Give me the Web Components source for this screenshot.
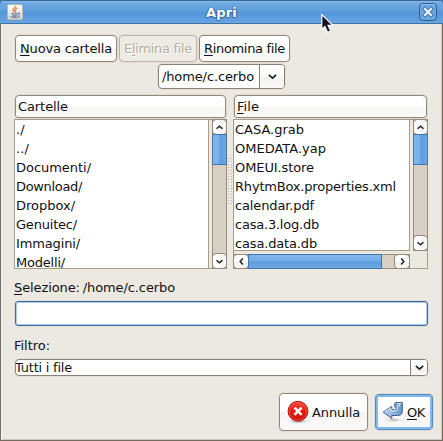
<!DOCTYPE html>
<html lang="it"><head><meta charset="utf-8"><title>Apri</title>
<style>
html,body{margin:0;width:443px;height:441px;overflow:hidden;background:#47789f;font:13px/19px "DejaVu Sans",sans-serif;color:#111}
</style></head><body><file-dialog></file-dialog>
<script>
const define=(name,html,setup)=>customElements.define(name,class extends HTMLElement{
  connectedCallback(){
    if(this.shadowRoot)return;
    const t=document.createElement('template');
    t.innerHTML='<style>*{box-sizing:border-box}:host{box-sizing:border-box}</style>'+html;
    this.attachShadow({mode:'open'}).appendChild(t.content.cloneNode(true));
    if(setup)setup(this,this.shadowRoot);
  }
});

/* Single-line text; w = advance width in pixels, key = index of the mnemonic letter */
define('fit-text',`<style>:host{display:block;white-space:pre;flex:none}span{display:inline-block}u{text-decoration:underline 1px;text-underline-offset:2px;text-decoration-skip-ink:none}</style><span></span>`,(h,r)=>{
  const s=r.querySelector('span'),t=h.getAttribute('t'),w=+h.getAttribute('w'),k=h.getAttribute('key');
  if(k===null)s.textContent=t;
  else{const u=document.createElement('u');u.textContent=t[+k];s.append(t.slice(0,+k),u,t.slice(+k+1))}
  if(w)s.style.letterSpacing=((w-s.getBoundingClientRect().width)/t.length)+'px';
});

define('push-button',`<style>
:host{display:flex;align-items:center;height:27px;border:1px solid #93877a;border-radius:4px;padding:0 0 1px 4px;background:linear-gradient(#fff 0,#fff 50%,#f5f4f2 51%,#fbfaf9 100%);box-shadow:0 0 0 1px #e3dfd7}
:host([disabled]){border-color:#bfb4a6;background:#eeebe5;color:#b8ae9f;text-shadow:1px 1px #fff}
:host([big]){height:38px;padding:0 0 1px 7px}
:host([primary]){height:36px;border:1px solid #5188c0;box-shadow:inset 0 0 0 2px #82b8ee,0 0 0 1px #e0dcd4;padding:0 0 1px 6px}
</style><slot></slot>`);

define('chevron-icon',`<style>:host{display:block;width:9px;height:9px}svg{display:block}:host([dir=up]) svg{transform:rotate(180deg)}:host([dir=left]) svg{transform:rotate(90deg)}:host([dir=right]) svg{transform:rotate(-90deg)}:host([big]) svg{transform:scale(1.22)}</style>
<svg width="9" height="9" viewBox="0 0 9 9"><path d="M1.5 3.2 4.5 5.8 7.5 3.2" fill="none" stroke="#222" stroke-width="1.5"/></svg>`);

define('combo-box',`<style>
:host{display:flex;border:1px solid #8c8074;border-radius:4px;background:#fff;box-shadow:0 0 0 1px #e3dfd7;overflow:hidden}
.v{flex:1;display:flex;align-items:center;overflow:hidden}
.b{width:25px;border-left:1px solid #8c8074;display:grid;place-items:center;background:linear-gradient(#fff 50%,#f3f1ee 51%,#faf9f8)}
:host([narrow]) .b{width:17px}
</style><div class="v"><slot></slot></div><div class="b"><chevron-icon big></chevron-icon></div>`);

define('column-header',`<style>:host{display:flex;align-items:center;height:23px;border:1px solid #94887d;border-radius:4px 4px 3px 3px;padding-left:3px;background:linear-gradient(#fff 50%,#f6f5f3 51%,#fafaf8);box-shadow:0 0 0 1px #e0dbd2}</style><slot></slot>`);

define('scroll-bar',`<style>
:host{display:flex;flex-direction:column;width:15px;border:1px solid #9b8f7c;background:#d8d0c5}
:host([h]){flex-direction:row;width:auto;height:15px}
.b{flex:0 0 14px;display:grid;place-items:center;background:linear-gradient(90deg,#fff 50%,#f1efec 51%,#faf9f8);outline:1px solid #94897c;border-radius:3px}
:host([h]) .b{background:linear-gradient(#fff 50%,#f1efec 51%,#faf9f8)}
.t{flex:0 0 var(--thumb);margin:1px 0 0;outline:1px solid #4375a5;background:linear-gradient(90deg,#80b7ee 0,#78b0e9 48%,#5d9bdc 52%,#6da9e5)}
:host([h]) .t{margin:0 0 0 1px;background:linear-gradient(#80b7ee 0,#72ace7 48%,#5c9bdc 52%,#6da9e5)}
.s{flex:1}
</style><div class="b"><chevron-icon class="a"></chevron-icon></div><div class="t"></div><div class="s"></div><div class="b"><chevron-icon class="z"></chevron-icon></div>`,(h,r)=>{
  const horizontal=h.hasAttribute('h');
  r.querySelector('.a').setAttribute('dir',horizontal?'left':'up');
  r.querySelector('.z').setAttribute('dir',horizontal?'right':'down');
});

define('list-pane',`<style>
:host{display:grid;grid-template-columns:1fr 14px;column-gap:3px;height:150px;border:1px solid #a99d86;background:#ece9e2}
.l{overflow:hidden;background:#fff;border-right:1px solid #a99d86;padding-left:var(--inset,2px)}
:host([both]){grid-template-rows:131px 14px;row-gap:3px}
:host([both]) .l{border-bottom:1px solid #a99d86}
.v{margin:-1px -1px -1px 0}:host([both]) .v{margin-bottom:0}
.h{margin:0 0 0 -1px;display:none}:host([both]) .h{display:flex}
</style><div class="l"><slot></slot></div><scroll-bar class="v" style="--thumb:29px"></scroll-bar><scroll-bar h class="h" style="--thumb:132px"></scroll-bar>`);

define('java-icon',`<style>:host{display:block;width:16px;height:16px}</style><svg width="16" height="16" viewBox="0 0 16 16">
<defs><linearGradient id="g" x2="0" y2="1"><stop stop-color="#fff"/><stop offset="1" stop-color="#d6d5d2"/></linearGradient></defs>
<rect x=".5" y=".5" width="15" height="15" rx="1.5" fill="url(#g)" stroke="#b9b6b0"/>
<path d="M8.8 1.7C9.5 3.2 5.3 4.6 6 6.3c.3.8 1.2 1.3 1.2 2M10.3 4.2C8.2 5 7.5 5.9 8.5 7c.5.6.3 1-.2 1.6" fill="none" stroke="#ed8228" stroke-width="1.3"/>
<path d="M4.2 9.2c1.5.7 5 .7 7 0M5 10.8c1.5.6 4 .6 5.5 0M11 9.3c2.2-.8 2.8 1.3.2 2.3M3.2 12.4c2 1.5 7.3 1.4 9.7.2M5.5 12c1.5.4 3 .4 4.2 0" fill="none" stroke="#547b99" stroke-width="1"/></svg>`);

define('title-bar',`<style>
:host{display:grid;grid-template-columns:27px 1fr 27px;align-items:center;height:24px;padding:1px 0 0;border-top:1px solid #3c6890;border-bottom:1px solid #41719f;background:linear-gradient(#86bbef 0,#70aae4 9%,#5f9edd 45%,#5295d6 52%,#5899dd 62%,#67a5e3 100%);color:#fff}
java-icon{margin:-1px 0 0 7px}.t{justify-self:center;font-weight:bold;text-shadow:0 1px 1px #285c91,1px 0 1px #396d9f,-1px 0 1px #396d9f}
.x{width:18px;height:18px;margin:-1px 0 0 3px}svg{display:block}
</style><java-icon></java-icon><fit-text class="t" t="Apri" w="31"></fit-text><div class="x"><svg width="18" height="18"><rect x=".5" y=".5" width="17" height="17" rx="3" fill="#6ba6df" stroke="#315f8d"/><path d="M2 1.5h14" stroke="#8dbdf0"/><path d="m6 6 6 6m0-6-6 6" stroke="#4376a8" stroke-width="4" stroke-linecap="square"/><path d="m6 6 6 6m0-6-6 6" stroke="#eef6fd" stroke-width="2.1" stroke-linecap="square"/></svg></div>`);

define('cancel-icon',`<style>:host{display:block;width:24px;height:24px}</style><svg width="24" height="24"><defs><linearGradient id="r" x2="0" y2="1"><stop stop-color="#f4513d"/><stop offset=".45" stop-color="#ef1c10"/><stop offset="1" stop-color="#c81109"/></linearGradient><radialGradient id="s"><stop stop-color="#777" stop-opacity=".8"/><stop offset="1" stop-color="#999" stop-opacity="0"/></radialGradient></defs>
<ellipse cx="11.5" cy="21.3" rx="10" ry="2.4" fill="url(#s)"/><circle cx="11" cy="11.2" r="9.9" fill="url(#r)" stroke="#a90e08"/><circle cx="11" cy="11.2" r="8.9" fill="none" stroke="#f66758" opacity=".7"/><path d="m8.3 8.5 5.4 5.4m0-5.4-5.4 5.4" stroke="#fff" stroke-width="2.5" stroke-linecap="square"/></svg>`);

define('return-icon',`<style>:host{display:block;width:22px;height:22px}</style><svg width="22" height="22"><defs><linearGradient id="b" x2="1" y2="0"><stop stop-color="#b7d1ed"/><stop offset=".5" stop-color="#8fb5df"/><stop offset="1" stop-color="#6593c8"/></linearGradient><radialGradient id="s"><stop stop-color="#888" stop-opacity=".65"/><stop offset="1" stop-color="#aaa" stop-opacity="0"/></radialGradient></defs>
<ellipse cx="11.5" cy="19" rx="9" ry="2.2" fill="url(#s)"/><path d="M13.5 1.5h6.8v8.6q0 4.4-4.8 4.4H9.8v2.9L1.2 11.2 9.8 5.3v3.4h3q1.4 0 1.4-1.5V6h-1.5V2.4z" fill="url(#b)" stroke="#3e6291" stroke-linejoin="round"/><path d="M15 2.5h4.3M2.8 11.2 8.8 7v2.8h4.5q2 0 2-2.4V5h2.4V2.8" fill="none" stroke="#e3effb" stroke-width=".9"/></svg>`);

define('mouse-pointer',`<style>:host{position:absolute;left:321px;top:13px;width:14px;height:21px}svg{display:block}</style><svg width="14" height="21"><path d="M.8 1.6v14.8l3.1-2.9 2.7 5.9 3.1-1.4-2.6-5.6h4.8z" fill="#141226" stroke="#fff" stroke-width="1.2"/></svg>`);

const rows=a=>a.map(([t,w])=>`<fit-text t="${t}" w="${w}"></fit-text>`).join('');
define('file-dialog',`<style>
:host{display:flex;flex-direction:column;position:relative;width:443px;height:441px;border-radius:5px 5px 0 0;overflow:hidden}
title-bar{flex:none}
main{flex:1;display:flex;flex-direction:column;background:#ece9e2;border:solid #766b60;border-width:0 1px 1px;box-shadow:inset 1px 0 #faf8f4,inset -1px -1px #cdc5b9}
.tools{display:flex;gap:2px;margin:11px 0 0 14px}
.path{width:127px;height:25px;margin:2px 0 0 157px}
.lists{display:grid;grid-template-columns:213px 6px 195px;margin:6px 0 0 13px}
.lists column-header{margin:0 1px 1px}
.grip{align-self:start;margin:39px 0 0 1px;width:5px;height:48px;background:radial-gradient(circle at .5px .5px,#b8afa1 .7px,transparent .8px) 0 0/3px 3px}
.entry{width:413px;height:25px;border:1px solid #3d6d9e;border-radius:3px;margin:4px 0 0 14px;background:#fff;box-shadow:inset 0 0 0 1px #a9cbed,0 0 0 1px #e2ded6}
.actions{display:flex;justify-content:flex-end;align-items:center;gap:7px;margin:17px 9px 0 0}
</style>
<title-bar></title-bar><main>
<div class="tools"><push-button style="width:102px"><fit-text t="Nuova cartella" key="0" w="92"></fit-text></push-button><push-button disabled style="width:78px"><fit-text t="Elimina file" key="1" w="68"></fit-text></push-button><push-button style="width:91px"><fit-text t="Rinomina file" key="0" w="81"></fit-text></push-button></div>
<combo-box class="path"><fit-text style="margin-left:3px" t="/home/c.cerbo" w="92"></fit-text></combo-box>
<div class="lists"><column-header><fit-text style="margin-left:-1px" t="Cartelle" w="50"></fit-text></column-header><i></i><column-header style="padding-left:2px"><fit-text t="File" key="0" w="22"></fit-text></column-header>
<list-pane style="--inset:1px">${rows([['./',9],['../',13],['Documenti/',75],['Download/',66],['Dropbox/',59],['Genuitec/',61],['Immagini/',64],['Modelli/',49]])}</list-pane><div class="grip"></div>
<list-pane both style="--inset:1px">${rows([['CASA.grab',69],['OMEDATA.yap',91],['OMEUI.store',79],['RhytmBox.properties.xml',161],['calendar.pdf',79],['casa.3.log.db',84],['casa.data.db',82]])}</list-pane></div>
<fit-text style="margin:9px 0 0 13px;word-spacing:-1px" t="Selezione: /home/c.cerbo" key="0" w="161"></fit-text>
<div class="entry"></div>
<fit-text style="margin:10px 0 0 13px" t="Filtro:" w="36"></fit-text>
<combo-box narrow style="width:413px;height:17px;margin:4px 0 0 14px"><fit-text style="margin-left:-1px" t="Tutti i file" w="57"></fit-text></combo-box>
<div class="actions"><push-button big style="width:89px"><cancel-icon></cancel-icon><fit-text style="margin:2px 0 0 1px" t="Annulla" w="48"></fit-text></push-button><push-button big primary style="width:58px"><return-icon></return-icon><fit-text style="margin:2px 0 0 3px" t="OK" key="0" w="18"></fit-text></push-button></div>
</main><mouse-pointer></mouse-pointer>`);
</script></body></html>
